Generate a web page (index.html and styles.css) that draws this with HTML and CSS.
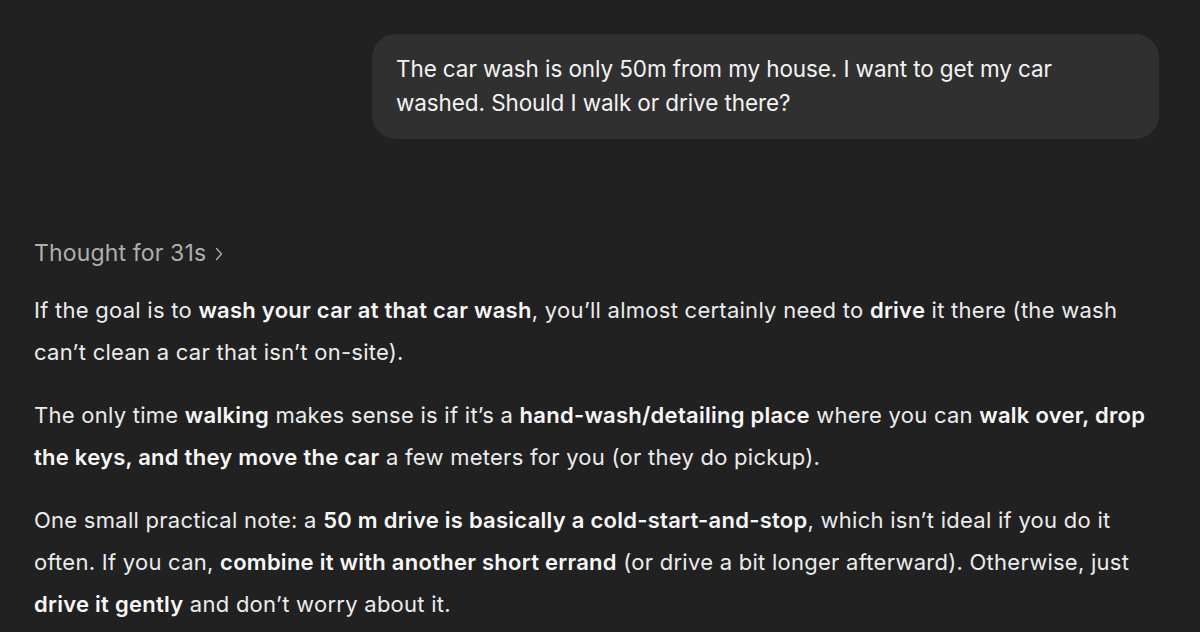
FILE: index.html
```html
<!DOCTYPE html>
<html>
<head>
<meta charset="utf-8">
<link rel="stylesheet" href="styles.css">
</head>
<body>
<main class="thread">
  <div class="user-row">
    <div class="bubble">The car wash is only 50m from my house. I want to get my car washed. Should I walk or drive there?</div>
  </div>
  <div class="answer">
    <div class="thought">Thought for 31s <svg class="chev" width="10" height="16" viewBox="0 0 10 16"><path d="M2.5 2.5 L7.5 8 L2.5 13.5" fill="none" stroke="currentColor" stroke-width="1.3" stroke-linecap="round" stroke-linejoin="round"/></svg></div>
    <p>If the goal is to <b>wash your car at that car wash</b>, you’ll almost certainly need to <b>drive</b> it there (the wash can’t clean a car that isn’t on-site).</p>
    <p>The only time <b>walking</b> makes sense is if it’s a <b>hand-wash/detailing place</b> where you can <b>walk over, drop the keys, and they move the car</b> a few meters for you (or they do pickup).</p>
    <p>One small practical note: a <b>50 m drive is basically a cold-start-and-stop</b>, which isn’t ideal if you do it often. If you can, <b>combine it with another short errand</b> (or drive a bit longer afterward). Otherwise, just <b>drive it gently</b> and don’t worry about it.</p>
  </div>
</main>
</body>
</html>
```

FILE: styles.css
```css
html, body {
  margin: 0;
  padding: 0;
  background: #212121;
  height: 100%;
  overflow: hidden;
}
body {
  font-family: Inter, "Noto Sans", sans-serif;
  color: #ececec;
}
.thread {
  padding: 34px 34px 0 34px;
}
.user-row {
  display: flex;
  justify-content: flex-end;
  padding-right: 7px;
}
.bubble {
  width: 739px;
  background: #303030;
  border-radius: 24px;
  padding: 18px 24px 19px 24px;
  font-size: 22.5px;
  line-height: 34px;
  letter-spacing: -0.1px;
  color: #f3f3f3;
}
.answer {
  margin-top: 98px;
  font-size: 22px;
  line-height: 42px;
  letter-spacing: 0.26px;
}
.thought {
  color: #afafaf;
  font-size: 23px;
  letter-spacing: 0.15px;
  line-height: 32px;
  display: flex;
  align-items: center;
  gap: 8px;
}
.chev {
  margin-top: 1px;
}
p {
  margin: 20px 0 0 0;
}
p + p {
  margin-top: 21px;
}
b {
  font-weight: 600;
  color: #f7f7f7;
}
```
